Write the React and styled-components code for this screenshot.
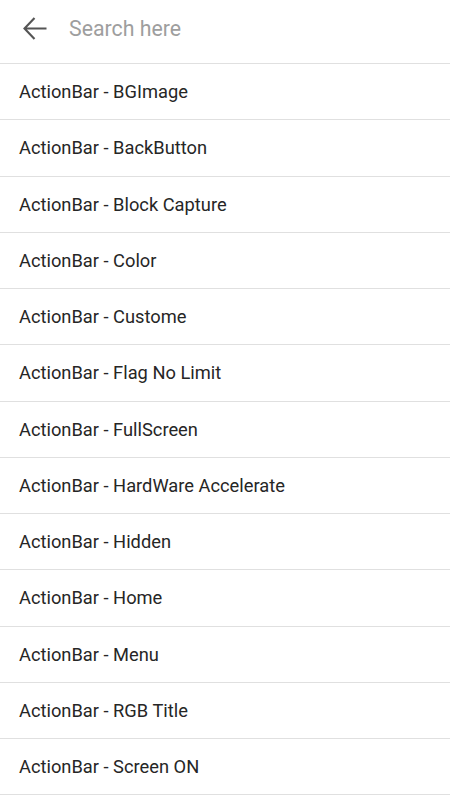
import React from 'react';
import styled, { createGlobalStyle } from 'styled-components';

const Global = createGlobalStyle`
    body {
        margin: 0;
        background: #fff;
        font-family: Roboto, "Noto Sans", sans-serif;
    }
`
const Container = styled.div `
    width: 450px;
    height: 800px;
    overflow: hidden;
    background: #fff;
`
const Header = styled.div `
    height: 64px;
    box-sizing: border-box;
    display: flex;
    align-items: center;
    border-bottom: 1px solid #e0e0e0;
`
const BackButton = styled.button `
    width: 69px;
    height: 56px;
    padding: 0 0 0 23px;
    border: none;
    background: none;
    display: flex;
    align-items: center;
    cursor: pointer;
    margin-top: -7px;
`
const SearchInput = styled.input `
    flex: 1;
    border: none;
    outline: none;
    padding: 0;
    font-family: Roboto, sans-serif;
    font-size: 21.3px;
    color: #212121;
    background: transparent;
    margin-top: -6px;
    &::placeholder {
        color: #9e9e9e;
    }
`
const List = styled.ul `
    list-style: none;
    margin: 0;
    padding: 0;
`
const Row = styled.li `
    height: 56.25px;
    box-sizing: border-box;
    display: flex;
    align-items: center;
    padding-left: 19px;
    border-bottom: 1px solid #e0e0e0;
    font-size: 18.3px;
    color: #262626;
`

const items = [
    'BGImage',
    'BackButton',
    'Block Capture',
    'Color',
    'Custome',
    'Flag No Limit',
    'FullScreen',
    'HardWare Accelerate',
    'Hidden',
    'Home',
    'Menu',
    'RGB Title',
    'Screen ON',
]

const App = () => {
    return (
        <Container>
            <Global />
            <Header>
                <BackButton>
                    <svg width="24" height="23" viewBox="0 0 24 23">
                        <path d="M23.5 11.5H2M11.5 1L1.5 11.5L11.5 22" fill="none" stroke="#555" strokeWidth="2.1" />
                    </svg>
                </BackButton>
                <SearchInput placeholder="Search here" />
            </Header>
            <List>
                {items.map(name => (
                    <Row key={name}>ActionBar - {name}</Row>
                ))}
            </List>
        </Container>
    )
}

export default App
